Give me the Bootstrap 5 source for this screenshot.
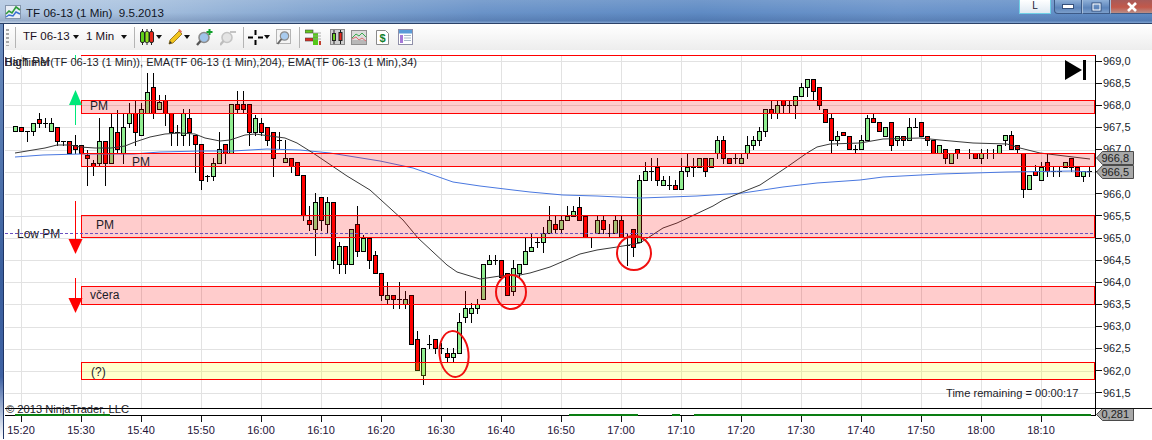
<!DOCTYPE html>
<html lang="cs">
<head>
<meta charset="utf-8">
<title>TF 06-13 (1 Min) 9.5.2013</title>
<link href="https://cdn.jsdelivr.net/npm/bootstrap@5.3.0/dist/css/bootstrap.min.css" rel="stylesheet">
<style>
html,body{margin:0;width:1152px;height:440px;overflow:hidden;background:#fff;font-family:"Liberation Sans",Arial,sans-serif;color:#1c1c24}
.nt-title{height:24px;position:relative;background:linear-gradient(to bottom,rgba(255,255,255,.12),rgba(255,255,255,0) 55%,rgba(10,30,80,.16) 90%,rgba(255,255,255,.2)),linear-gradient(to right,#b4c9e2 0,#a9c2df 120px,#86a8d2 300px,#6a93c8 480px,#5f8bc4 700px,#6b94ca 900px,#5f8cc6 1152px);border-bottom:1px solid #2c4268}
.nt-appicon{margin:0 5px 0 5px}
.nt-titletext{font-size:11.6px;white-space:pre;color:#10151f}
.nt-l{width:32px;height:14px;margin-right:3px;background:linear-gradient(#fff,#dfe9f2);border:1px solid #6fd0e6;border-top:0;font-size:10px;line-height:12px;text-align:center;color:#223}
.nt-wbtn{height:14px;border:1px solid #3d5a86;border-top:0;display:flex;align-items:center;justify-content:center;background:linear-gradient(#8fb0d8,#5c84ba 60%,#7c9fcb)}
.nt-min{width:28px;border-bottom-left-radius:4px}.nt-max{width:28px;border-left:1px solid #a9c0dc}
.nt-close{width:42px;background:linear-gradient(#a75b5a,#c2584a 55%,#b98e88);border-left:1px solid #a9c0dc;border-right:0}
.nt-body{position:relative;padding-left:5px}
.nt-frame{position:absolute;left:0;top:0;bottom:0;width:4px;background:linear-gradient(#6d8fc0,#3a5f9e 60%,#3f62a3 85%,#fff 100%);border-right:1px solid #1f3565}
.nt-toolbar{height:26px;background:linear-gradient(#fff,#f9f9f9 35%,#ededed);padding-left:1px;font-size:11.5px}
.nt-grip{width:3px;height:17px;background:repeating-linear-gradient(#a8a8a8 0 2px,transparent 2px 4px)}
.nt-sep{width:1px;height:21px;background:#b4b4b4}
.nt-tw45{width:45px;white-space:nowrap;color:#1a0f20}.nt-tw31{width:31px;white-space:nowrap;color:#1a0f20}
.nt-caret{width:0;height:0;border:3.5px solid transparent;border-top:4px solid #111;border-bottom:0}
.m1x{margin-left:1px}.m2x{margin-left:2px}.m4x{margin-left:4px}.m5x{margin-left:5px}.m6x{margin-left:6px}.m7x{margin-left:7px}.m8x{margin-left:8px}.m9x{margin-left:9px}
.nt-plotrow{height:366px;position:relative}
.nt-plot{width:1091px;padding-top:4px;flex:none}
.nt-plot svg{display:block}
.nt-plot text{font-family:"Liberation Sans",Arial,sans-serif;fill:#1c1c28}
.nt-pricecol{position:relative;flex:1 1 auto}
.nt-price{height:22.13px;font-size:11px;color:#20242c}
.nt-price i{display:block;width:6px;height:1px;background:#111;margin-right:1px}
.nt-tag{position:absolute;left:0;width:38px;height:14px;font-size:11px;line-height:14px;text-align:right;padding-right:5px;color:#1c1c1c}
.nt-tag svg{position:absolute;left:0;top:0}
.nt-tag span{position:relative}
.nt-t1{top:101px}.nt-t2{top:115px}.nt-t3{top:358px;height:13px;line-height:13px}
.nt-hline{position:absolute;left:1091px;right:0;top:358px;height:1px;background:#111}
.nt-timerow{margin-left:-14px;font-size:11px;color:#1e1238}
.nt-tick{width:60px;flex:none}
.nt-tick i{display:block;width:1px;height:6px;background:#111}
</style>
</head>
<body>
<header class="nt-title d-flex align-items-start">
  <svg class="nt-appicon mt-1" width="16" height="16" viewBox="0 0 16 16"><rect x=".5" y="1.5" width="15" height="13" fill="#e9eef6" stroke="#8596ac"/><path d="M1 10l3-3 3 2 4-6 4 3" fill="none" stroke="#2f9a3c" stroke-width="1.6"/><path d="M1 13l3-2 4 1 3-4 4 2" fill="none" stroke="#3a6fd0" stroke-width="1.4"/></svg>
  <span class="nt-titletext mt-1">TF 06-13 (1 Min)  9.5.2013</span>
  <div class="ms-auto d-flex">
    <div class="nt-l">L</div>
    <div class="nt-wbtn nt-min"><svg width="12" height="5"><rect x=".5" y=".5" width="11" height="4" fill="#fff" stroke="#34507c"/></svg></div>
    <div class="nt-wbtn nt-max"><svg width="11" height="10"><rect x="1" y="1" width="9" height="8" fill="none" stroke="#34507c" stroke-width="1"/><rect x="2" y="2" width="7" height="6" fill="none" stroke="#fff" stroke-width="1"/></svg></div>
    <div class="nt-wbtn nt-close"><svg width="12" height="10"><path d="M2 1l8 8M10 1l-8 8" stroke="#fff" stroke-width="2.6"/></svg></div>
  </div>
</header>
<div class="nt-body">
  <div class="nt-frame"></div>
  <div class="nt-toolbar d-flex align-items-center">
    <div class="nt-grip"></div>
    <div class="nt-sep m6x"></div>
    <span class="nt-tw45 m7x">TF 06-13</span>
    <div class="nt-caret m5x"></div>
    <span class="nt-tw31 m7x">1 Min</span>
    <div class="nt-caret m4x"></div>
    <div class="nt-sep m7x"></div>
    <svg class="m5x" width="14" height="16" viewBox="0 0 14 16"><path d="M2.5 0v16M7 0v16M11.5 0v16" stroke="#222"/><rect x=".5" y="2.5" width="4" height="11" rx="1.5" fill="#5ed01a" stroke="#222"/><rect x="5" y="2.5" width="4" height="11" rx="1.5" fill="#8fe01f" stroke="#222"/><rect x="9.5" y="2.5" width="4" height="11" rx="1.5" fill="#e8281c" stroke="#222"/></svg>
    <div class="nt-caret m2x"></div>
    <svg class="m6x" width="14" height="16" viewBox="0 0 14 16"><path d="M1 15l1-4L11 2l3 3-9 9z" fill="#f2c51e" stroke="#8a6a12" stroke-width=".8"/><path d="M10 1l1.5-1L14 2.500 13 4z" fill="#e0705a"/><path d="M1 15l1-3 2 2z" fill="#333"/></svg>
    <div class="nt-caret m2x"></div>
    <svg class="m6x" width="17" height="17" viewBox="0 0 17 17"><circle cx="8" cy="8.500" r="5" fill="#9fc3ea" stroke="#8c8c8c" stroke-width="1.600"/><path d="M4.500 12L1 16" stroke="#555" stroke-width="2.400"/><path d="M13.500 0v6M10.500 3h6" stroke="#12a02c" stroke-width="2"/></svg>
    <svg class="m7x" width="16" height="17" viewBox="0 0 16 17"><circle cx="7" cy="8.500" r="5" fill="#e4e4e4" stroke="#c4c4c4" stroke-width="1.600"/><path d="M3.500 12L0 16" stroke="#bdbdbd" stroke-width="2.400"/><path d="M10 3h6" stroke="#c4c4c4" stroke-width="2"/></svg>
    <div class="nt-sep m7x"></div>
    <svg class="m4x" width="15" height="15" viewBox="0 0 15 15"><path d="M7.500 0v5M7.500 10v5M0 7.500h5M10 7.500h5" stroke="#000" stroke-width="2"/></svg>
    <div class="nt-caret m1x"></div>
    <svg class="m6x" width="15" height="17" viewBox="0 0 15 17"><rect x=".5" y=".5" width="14" height="14" fill="#f4f4f4" stroke="#b4b4b4"/><circle cx="8.500" cy="7" r="4.200" fill="#a9cbee" stroke="#8c8c8c" stroke-width="1.200"/><path d="M5.500 10L1.500 15" stroke="#666" stroke-width="2"/></svg>
    <div class="nt-sep m8x"></div>
    <svg class="m5x" width="16" height="17" viewBox="0 0 16 17"><rect x="0" y="1" width="8" height="3" fill="#66c81e" stroke="#444" stroke-width=".6"/><rect x="0" y="9" width="8" height="3" fill="#e02b20" stroke="#444" stroke-width=".6"/><rect x="8" y="4" width="5" height="12" fill="#55c81a"/><rect x="14" y="12" width="2" height="4" fill="#c04030"/><path d="M8 4h8M8 7h8M8 10h8" stroke="#9a9a9a" stroke-width=".8"/></svg>
    <svg class="m9x" width="15" height="16" viewBox="0 0 15 16"><rect x=".5" y=".5" width="14" height="15" fill="#cfcfcf" stroke="#8a8a8a"/><path d="M4 1v14M10.500 1v14" stroke="#222"/><rect x="2.500" y="4.500" width="3" height="7" fill="#6ad020" stroke="#222"/><rect x="9" y="3.500" width="3" height="8" fill="#e8281c" stroke="#222"/></svg>
    <svg class="m6x" width="16" height="15" viewBox="0 0 16 15"><rect x=".5" y=".5" width="15" height="14" fill="#dcdcdc" stroke="#8f8f8f"/><rect x="1" y="10" width="14" height="4" fill="#b8b8b8"/><path d="M1 8l4-4 3 2 3-3 4 4" fill="none" stroke="#3aad50"/><path d="M1 9l4-2 3 3 3-2 4 3" fill="none" stroke="#de6a70"/></svg>
    <svg class="m9x" width="13" height="15" viewBox="0 0 13 15"><path d="M.5.500h9l3 3v11H.5z" fill="#fff" stroke="#8a8a8a"/><text x="6.500" y="12" font-size="11" font-weight="700" text-anchor="middle" fill="#12802c" font-family="Liberation Sans">$</text></svg>
    <svg class="m9x" width="15" height="16" viewBox="0 0 15 16"><rect x=".5" y=".5" width="14" height="15" fill="#fff" stroke="#8f8fa8"/><rect x="1" y="1" width="13" height="3.500" fill="#5a9bd8"/><rect x="2" y="6" width="3" height="8" fill="#a678d8"/><path d="M6 6.500h7M6 9h7M6 11.500h7" stroke="#a8b8c8"/></svg>
  </div>
  <div class="nt-plotrow d-flex">
    <div class="nt-plot"><svg id="plot" width="1091" height="362" viewBox="5 54 1091 362" xmlns="http://www.w3.org/2000/svg"></svg></div>
    <div class="nt-pricecol" id="prices">
      <div class="nt-tag nt-t1"><svg width="38" height="14"><polygon points=".5,7 6.500,.5 37.500,.5 37.500,13.500 6.500,13.500" fill="#a8a8a8" stroke="#4a4a4a"/></svg><span>966,8</span></div>
      <div class="nt-tag nt-t2"><svg width="38" height="14"><polygon points=".5,7 6.500,.5 37.500,.5 37.500,13.500 6.500,13.500" fill="#a8a8a8" stroke="#4a4a4a"/></svg><span>966,5</span></div>
      <div class="nt-tag nt-t3"><svg width="38" height="13"><polygon points=".5,6.500 6.500,.5 37.500,.5 37.500,12.500 6.500,12.500" fill="#a8a8a8" stroke="#4a4a4a"/></svg><span>0,281</span></div>
    </div>
    <div class="nt-hline"></div>
  </div>
  <div class="nt-timerow d-flex" id="times"></div>
</div>
<script src="https://cdn.jsdelivr.net/npm/bootstrap@5.3.0/dist/js/bootstrap.bundle.min.js"></script>
<script>
/* [x, bodyTop, bodyBottom, high, low, kind]  g=up, r=down, d=doji */
const C=[[15,126,131,126,131,'g'],[21,127,131,127,131,'r'],[27,131,131,131,141,'d'],[33,123,131,123,135,'g'],[39,119,123,113,127,'r'],[45,123,123,118,127,'d'],[51,123,131,118,131,'g'],[57,127,141,127,145,'r'],[63,141,141,141,145,'d'],[69,141,153,141,153,'r'],[75,145,149,135,153,'r'],[81,145,153,145,158,'r'],[87,155,158,150,185,'r'],[93,163,166,160,175,'r'],[99,141,163,118,166,'g'],[105,141,163,141,185,'r'],[111,127,163,113,163,'g'],[117,132,149,110,153,'r'],[123,127,153,113,163,'g'],[129,113,123,103,127,'g'],[135,113,132,100,145,'r'],[141,109,135,103,135,'g'],[147,92,113,73,113,'g'],[153,87,113,73,118,'r'],[159,102,109,95,109,'g'],[165,100,113,95,125,'r'],[171,113,132,113,145,'r'],[177,132,132,125,145,'d'],[183,113,135,109,145,'g'],[189,118,132,109,145,'r'],[195,135,144,135,172,'r'],[201,144,180,144,189,'r'],[207,176,176,175,181,'d'],[213,163,176,158,180,'g'],[219,149,163,132,163,'g'],[225,144,153,144,163,'r'],[231,104,153,104,153,'g'],[237,104,109,91,113,'r'],[243,104,109,91,113,'r'],[249,104,132,104,145,'r'],[255,118,132,115,135,'g'],[261,123,132,118,135,'r'],[267,127,140,127,145,'r'],[273,132,158,132,176,'r'],[279,140,140,132,148,'d'],[285,158,162,140,162,'g'],[291,158,166,158,172,'r'],[297,162,175,162,175,'r'],[303,175,215,175,220,'r'],[309,220,224,206,230,'r'],[315,202,229,193,255,'g'],[321,197,220,197,230,'r'],[327,202,224,197,233,'g'],[333,202,260,202,268,'r'],[339,246,264,242,273,'g'],[345,246,264,246,273,'r'],[351,229,264,229,264,'g'],[357,224,251,206,256,'r'],[363,238,251,235,251,'g'],[369,238,260,238,268,'r'],[375,255,273,251,273,'r'],[381,273,295,273,300,'r'],[387,295,299,282,303,'g'],[393,295,299,295,308,'r'],[399,299,299,282,308,'d'],[405,299,304,291,308,'g'],[411,295,344,295,344,'r'],[417,339,370,331,370,'r'],[423,348,375,348,384,'g'],[429,344,344,335,348,'d'],[435,339,348,339,353,'r'],[441,348,348,343,353,'d'],[447,353,357,348,362,'r'],[453,353,357,348,362,'g'],[459,322,353,313,353,'g'],[465,308,317,291,322,'g'],[471,308,313,303,322,'g'],[477,304,308,299,313,'g'],[483,264,299,264,299,'g'],[489,260,264,255,264,'g'],[495,260,260,255,264,'d'],[501,260,277,260,277,'r'],[507,273,295,273,295,'r'],[513,268,291,260,295,'g'],[519,264,273,264,277,'g'],[525,251,264,238,264,'g'],[531,247,251,233,251,'g'],[537,242,242,238,247,'d'],[543,233,242,227,252,'g'],[549,220,233,206,233,'g'],[555,224,229,216,233,'r'],[561,220,229,216,233,'g'],[567,216,220,206,220,'g'],[573,211,216,206,216,'g'],[579,207,220,197,220,'r'],[585,216,237,216,237,'r'],[591,237,237,237,247,'d'],[597,220,233,216,233,'g'],[603,220,229,216,233,'r'],[609,233,233,224,237,'d'],[615,220,233,216,233,'g'],[621,220,237,216,237,'r'],[627,245,245,233,265,'d'],[633,229,247,229,256,'r'],[639,180,242,175,242,'g'],[645,171,180,162,180,'g'],[651,171,171,158,180,'d'],[657,167,180,158,185,'r'],[663,180,185,176,185,'g'],[669,185,185,176,189,'d'],[675,185,189,180,189,'r'],[681,171,189,158,189,'g'],[687,167,171,154,176,'g'],[693,167,167,158,176,'d'],[699,158,167,158,167,'g'],[705,158,171,158,176,'r'],[711,158,167,158,167,'g'],[717,140,153,136,158,'g'],[723,140,158,136,163,'r'],[729,158,163,158,163,'r'],[735,158,158,153,163,'d'],[741,158,163,153,163,'g'],[747,145,153,136,158,'g'],[753,140,145,136,149,'g'],[759,131,140,127,145,'g'],[765,109,131,109,136,'g'],[771,109,113,100,118,'r'],[777,105,113,100,118,'g'],[783,100,105,100,113,'r'],[789,105,105,100,113,'d'],[795,96,105,96,118,'g'],[801,87,96,83,96,'g'],[807,79,87,79,96,'g'],[813,79,91,79,100,'r'],[819,87,105,87,109,'r'],[825,109,122,109,122,'r'],[831,118,140,114,153,'r'],[837,136,140,131,145,'g'],[843,132,135,132,135,'r'],[849,136,149,136,149,'r'],[855,149,149,145,153,'d'],[861,140,149,135,149,'g'],[867,118,140,115,140,'g'],[873,118,122,114,122,'r'],[879,122,131,122,131,'r'],[885,127,136,127,136,'g'],[891,122,145,122,150,'r'],[897,136,140,136,145,'g'],[903,136,140,136,145,'r'],[909,127,140,118,140,'g'],[915,127,127,118,127,'d'],[921,122,136,122,136,'r'],[927,136,140,136,145,'r'],[933,140,153,140,153,'r'],[939,145,153,145,153,'g'],[945,149,158,149,163,'r'],[951,153,163,153,163,'g'],[957,149,153,149,158,'r'],[969,153,153,149,158,'d'],[975,153,158,153,158,'r'],[981,153,158,149,163,'g'],[987,153,153,149,158,'d'],[993,153,153,149,158,'d'],[999,145,153,145,153,'g'],[1005,135,140,135,145,'g'],[1011,135,149,131,149,'r'],[1017,145,149,145,153,'r'],[1023,153,189,153,197,'r'],[1029,175,189,175,189,'g'],[1035,171,175,165,175,'r'],[1041,167,180,162,180,'g'],[1047,162,171,153,176,'r'],[1053,171,171,167,176,'d'],[1059,171,171,167,176,'d'],[1065,162,167,162,167,'g'],[1071,158,167,158,171,'r'],[1077,167,176,167,176,'r'],[1083,171,176,171,181,'g'],[1089,171,171,167,176,'d']];
const EMA34=[[15,153],[27,151],[45,148],[57,145],[70,145],[80,147],[95,148],[111,148],[125,146],[135,142],[150,137],[165,134],[180,133],[195,134],[205,138],[220,141],[230,140],[245,135],[255,134],[270,136],[285,138],[297,143],[313,153],[347,176],[370,190],[403,220],[418,238],[447,265],[457,272],[480,279],[500,276],[520,275],[530,273],[550,267],[580,254],[597,250],[617,247],[640,243],[663,228],[677,223],[713,206],[723,200],[740,193],[760,185],[787,167],[807,153],[817,147],[830,144],[860,143],[883,139],[920,138],[940,140],[973,143],[1007,144],[1020,148],[1040,153],[1073,157],[1090,159]];
const EMA204=[[15,157],[43,155],[80,154],[133,154],[160,152],[200,151],[233,151],[267,149],[300,150],[330,153],[380,161],[413,168],[453,182],[480,186],[513,190],[530,192],[563,195],[597,196],[640,198],[670,197],[697,196],[743,193],[783,187],[817,183],[860,180],[883,177],[940,174],[1007,172],[1073,171],[1090,172]];
const Z=[[100,113,'r'],[153,166,'r'],[215,237,'r'],[286,304,'r'],[362,379,'y']];
let s='';
const ln=(a,b,c,d,col,w,x='')=>`<line x1="${a}" y1="${b}" x2="${c}" y2="${d}" stroke="${col}" stroke-width="${w||1}" ${x}/>`;
for(let x=21;x<1095;x+=60)s+=ln(x+.5,55,x+.5,408,'#e2e2e2');
for(let i=0;i<16;i++){const y=Math.round(61+i*22.13)+.5;s+=ln(5,y,1095,y,'#e2e2e2');}
s+=ln(81,55.5,1095,55.5,'#f00');
for(const [x,t,b,h,l,k] of C){
  s+=ln(x+.5,h,x+.5,l+1,'#000');
  if(k==='d')s+=ln(x-2,t+.5,x+3,t+.5,'#000');
  else s+=`<rect x="${x-1.5}" y="${t+.5}" width="4" height="${b-t}" fill="${k==='g'?'#90ee90':'#f00'}" stroke="#000"/>`;
}
const pl=(p,c)=>`<polyline points="${p.map(q=>q.join(',')).join(' ')}" fill="none" stroke="${c}" stroke-width="1"/>`;
s+=pl(EMA204,'#4a78e0')+pl(EMA34,'#3a3a3a');
for(const [t,b,k] of Z)s+=`<rect x="81.500" y="${t+.5}" width="1013" height="${b-t}" fill="${k==='r'?'rgba(255,0,0,.2)':'rgba(255,255,0,.2)'}" stroke="#f00"/>`;
s+=ln(5,233.5,1095,233.5,'#6a50c0',1,'stroke-dasharray="3 2"');
s+=`<ellipse cx="454" cy="354" rx="14.500" ry="23" transform="rotate(-6 454 354)" fill="none" stroke="#f01010" stroke-width="2"/><ellipse cx="511" cy="292" rx="15" ry="17" fill="none" stroke="#f01010" stroke-width="2"/><ellipse cx="634" cy="253" rx="17" ry="17" fill="none" stroke="#f01010" stroke-width="2"/>`;
s+=ln(75.5,55,75.5,60,'#00e87a')+ln(75.5,100,75.5,125,'#00e87a')+'<polygon points="75.500,90 82,105 69,105" fill="#00e87a"/>';
s+=ln(75.5,201,75.5,240,'#f00')+'<polygon points="68.500,239 82.500,239 75.500,254" fill="#f00"/>';
s+=ln(75.5,278,75.5,300,'#f00')+'<polygon points="68.500,298 82.500,298 75.500,313" fill="#f00"/>';
s+='<polygon points="1065,60 1082,70 1065,80" fill="#000"/><rect x="1083" y="60" width="3" height="20" fill="#000"/>';
s+=ln(5,408.5,1096,408.5,'#000')+ln(5,415.5,1096,415.5,'#000')+ln(1095.5,55,1095.5,416,'#000');
for(const [a,b] of [[15,110],[569,638],[672,680],[694,1091]])s+=ln(a,415,b,415,'#0a7d12',2);
const T=(x,y,t,fs)=>`<text x="${x}" y="${y}" font-size="${fs||11.15}">${t}</text>`;
s+=T(4,66,'High PM',12)+T(5,66,'BarTimer(TF 06-13 (1 Min)), EMA(TF 06-13 (1 Min),204), EMA(TF 06-13 (1 Min),34)',11.08);
s+=T(90,110,'PM',12)+T(132,166,'PM',12)+T(96,229,'PM',12)+T(90,299,'včera',12)+T(91,376,'(?)',12)+T(17,238,'Low PM',12);
s+=T(946,397,'Time remaining = 00:00:17')+T(6,413,'© 2013 NinjaTrader, LLC');
document.getElementById('plot').innerHTML=s;
const pc=document.getElementById('prices');
let h='';for(let i=0;i<16;i++){const p=(969-i*.5).toFixed(1).replace('.',',');h+=`<div class="nt-price d-flex align-items-center"><i></i><span>${p}</span></div>`;}
pc.insertAdjacentHTML('afterbegin',h);
let tt='';const nm=[];for(let i=0;i<18;i++){const m=15*60+20+i*10;nm.push(Math.floor(m/60)+':'+String(m%60).padStart(2,'0'));}
for(const n of nm)tt+=`<div class="nt-tick d-flex flex-column align-items-center"><i></i><span>${n}</span></div>`;
document.getElementById('times').innerHTML=tt;
</script>
</body>
</html>
